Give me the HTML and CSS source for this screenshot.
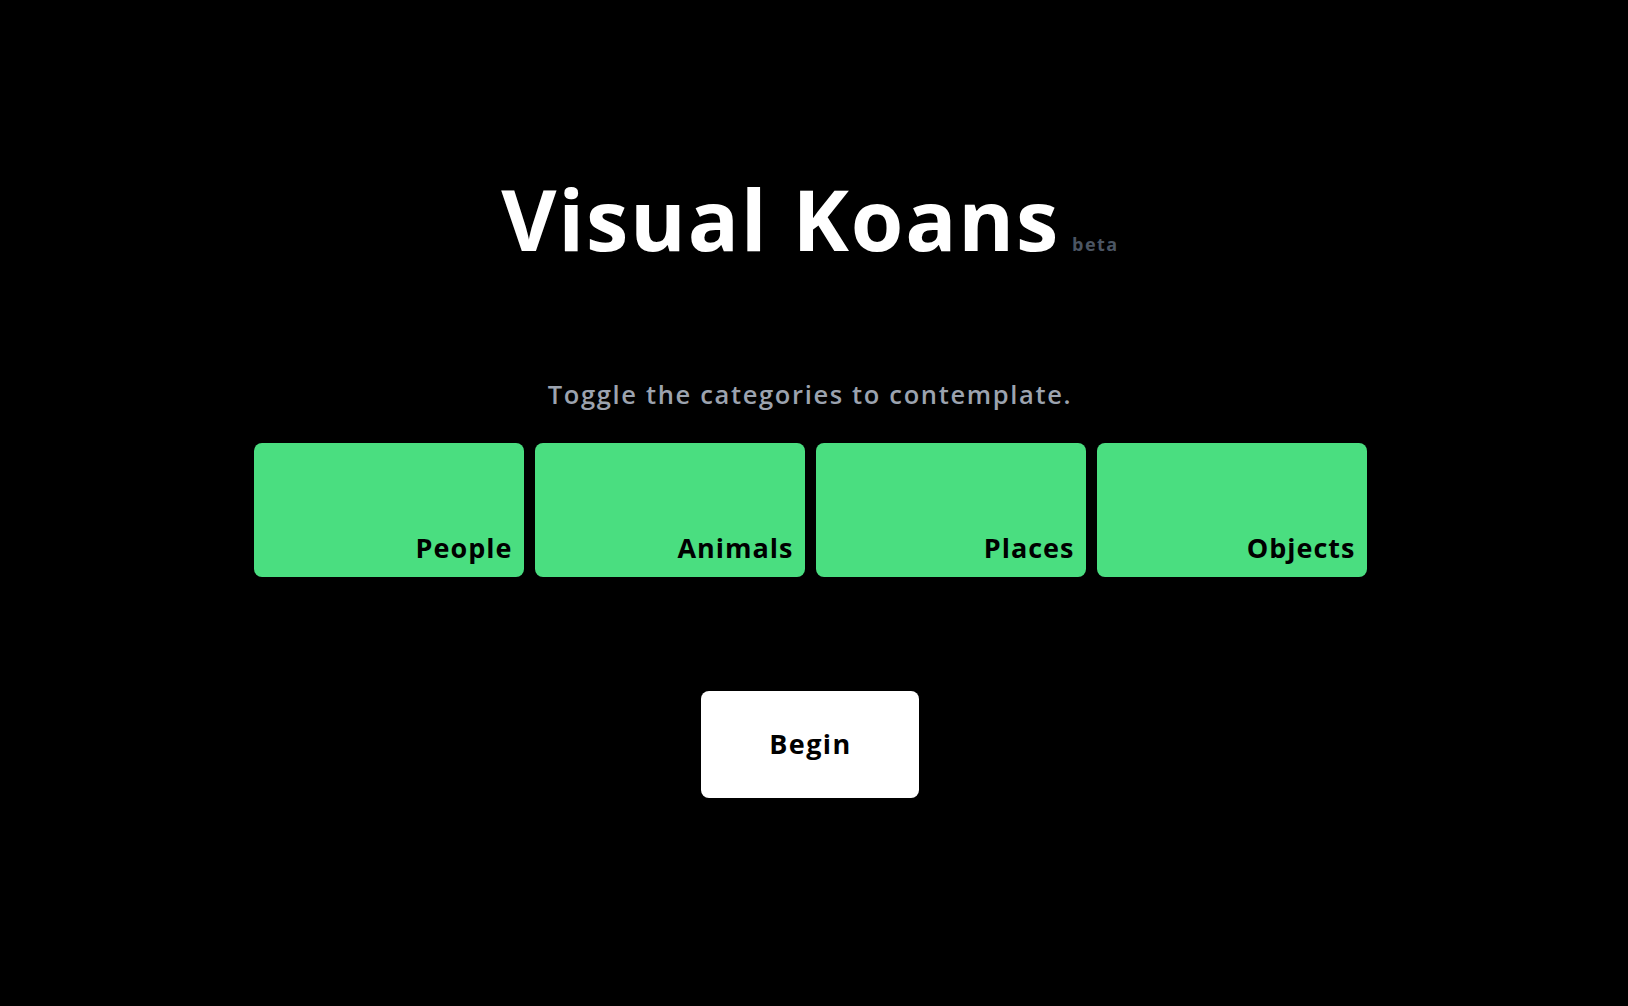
FILE: index.html
```html
<!DOCTYPE html>
<html lang="en">
<head>
<meta charset="utf-8">
<title>Visual Koans</title>
<link rel="stylesheet" href="styles.css">
</head>
<body>
<main class="page">
  <h1 class="title">Visual Koans<span class="beta">beta</span></h1>
  <p class="subtitle">Toggle the categories to contemplate.</p>
  <div class="categories">
    <button class="category">People</button>
    <button class="category">Animals</button>
    <button class="category">Places</button>
    <button class="category">Objects</button>
  </div>
  <button class="begin">Begin</button>
</main>
</body>
</html>
```

FILE: styles.css
```css
html, body {
  margin: 0;
  padding: 0;
  background: #000;
}

body {
  font-family: "Open Sans", "Lato", "Liberation Sans", sans-serif;
  color: #fff;
  min-height: 1006px;
}

.page {
  display: flex;
  flex-direction: column;
  align-items: center;
  padding: 176px 8px 0 0;
}

.title {
  margin: 0;
  font-size: 85px;
  line-height: 85px;
  font-weight: 700;
  letter-spacing: 1.8px;
  color: #fff;
  white-space: nowrap;
}

.beta {
  margin-left: 12px;
  font-size: 18px;
  line-height: 1;
  font-weight: 700;
  letter-spacing: 1.5px;
  color: #4b5563;
}

.subtitle {
  margin: 121px 0 0;
  font-size: 25.5px;
  line-height: 25.5px;
  font-weight: 600;
  letter-spacing: 1.65px;
  color: #9ca3af;
}

.categories {
  margin-top: 35px;
  display: grid;
  grid-template-columns: repeat(4, 270px);
  gap: 11px;
}

.category {
  height: 134px;
  border: 0;
  border-radius: 8px;
  background: #4ade80;
  color: #000;
  font-family: inherit;
  font-size: 27px;
  line-height: 27px;
  font-weight: 700;
  letter-spacing: 1px;
  display: flex;
  align-items: flex-end;
  justify-content: flex-end;
  padding: 0 11px 16px 0;
  cursor: pointer;
}

.begin {
  margin-top: 114px;
  width: 218px;
  padding: 39px 0 41px 1px;
  border: 0;
  border-radius: 8px;
  background: #fff;
  color: #000;
  font-family: inherit;
  font-size: 27px;
  line-height: 27px;
  font-weight: 700;
  letter-spacing: 1.4px;
  cursor: pointer;
}
```
